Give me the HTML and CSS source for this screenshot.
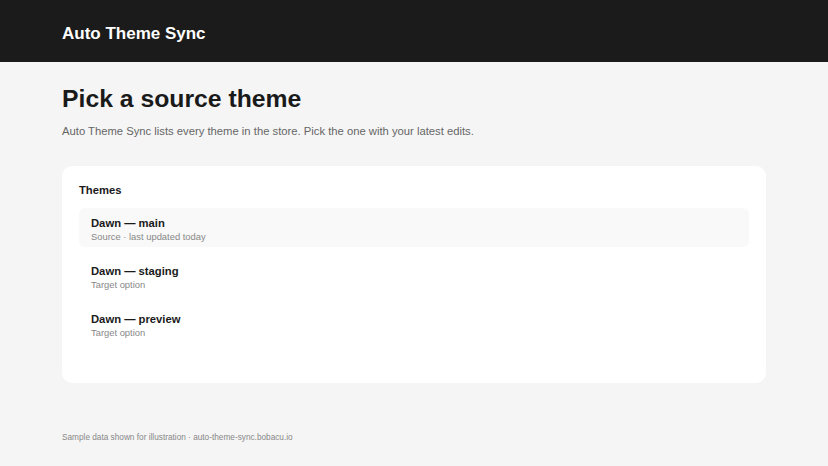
FILE: index.html
```html
<!DOCTYPE html>
<html lang="en">
<head>
    <meta charset="UTF-8">
    <meta name="viewport" content="width=device-width, initial-scale=1.0">
    <title>Auto Theme Sync</title>
    <link rel="stylesheet" href="styles.css">
</head>
<body>
    <header class="topbar">
      <div class="brand">Auto Theme Sync</div>
    </header>

    <main class="page">
      <h1 class="title">Pick a source theme</h1>
      <p class="lead">Auto Theme Sync lists every theme in the store. Pick the one with your latest edits.</p>

      <section class="card">
        <h2 class="card-title">Themes</h2>
        <ul class="theme-list">
          <li class="theme selected">
            <div class="theme-name">Dawn — main</div>
            <div class="theme-meta">Source · last updated today</div>
          </li>
          <li class="theme">
            <div class="theme-name">Dawn — staging</div>
            <div class="theme-meta">Target option</div>
          </li>
          <li class="theme">
            <div class="theme-name">Dawn — preview</div>
            <div class="theme-meta">Target option</div>
          </li>
        </ul>
      </section>

      <footer class="foot">Sample data shown for illustration · auto-theme-sync.bobacu.io</footer>
    </main>
</body>
</html>
```

FILE: styles.css
```css
body{
    margin:0;
    background-color:#f5f5f5;
    font-family:"Liberation Sans", Arial, Helvetica, sans-serif;
    color:#1a1a1a;
}
.topbar{
    background-color:#1b1b1b;
    height:62px;
    display:flex;
    align-items:center;
    padding:0 62px;
}
.brand{
    color:white;
    font-size:17px;
    font-weight:bold;
    margin-top:6px;
}
.page{
    padding:22px 62px 0;
}
.title{
    font-size:24.75px;
    line-height:30px;
    margin:0;
    font-weight:bold;
}
.lead{
    font-size:11.25px;
    line-height:16px;
    color:#666;
    margin:9px 0 0;
}
.card{
    background-color:white;
    border-radius:10px;
    margin-top:27px;
    padding:17px 17px 40px;
}
.card-title{
    font-size:11.25px;
    line-height:15px;
    margin:0 0 10px;
}
.theme-list{
    list-style:none;
    margin:0;
    padding:0;
    display:flex;
    flex-direction:column;
    gap:9px;
}
.theme{
    padding:8px 12px 4px;
    border-radius:6px;
    height:27px;
}
.theme.selected{
    background-color:#f9f9f9;
}
.theme-name{
    font-size:11.25px;
    line-height:14px;
    font-weight:bold;
}
.theme-meta{
    font-size:9.4px;
    line-height:13px;
    color:#888;
}
.foot{
    font-size:8.25px;
    color:#888;
    margin-top:50px;
}
```
